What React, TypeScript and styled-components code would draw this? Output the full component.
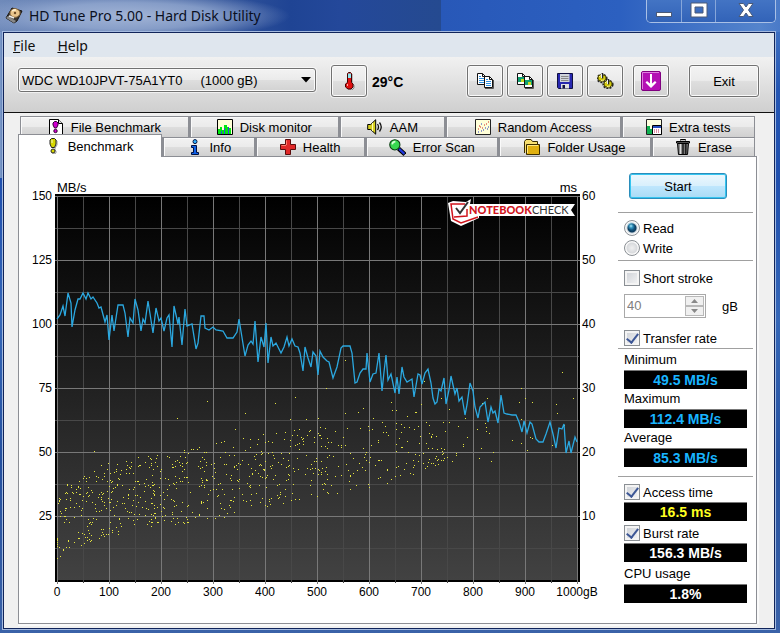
import React from 'react';
import styled, { createGlobalStyle, css } from 'styled-components';

const GlobalStyle = createGlobalStyle`
  * { box-sizing: border-box; }
  body {
    margin: 0;
    font-family: "Liberation Sans", Arial, sans-serif;
    font-size: 13px;
    color: #000;
  }
  button, input, select { font: inherit; color: inherit; margin: 0; }
`;

/* ---------- window frame ---------- */

const Window = styled.div`
  min-height: 100vh;
  display: flex;
  flex-direction: column;
  padding: 0 5px 4px 3px;
  background:
    linear-gradient(90deg, #7f9dcb 0, #5878b0 3px, transparent 4px) 0 32px / 4px 146px no-repeat,
    linear-gradient(180deg, #4a7cc8 0, #2456b4 90px, #1f4fae 180px, #3567b8 320px, #24509f 460px, #3a62a8 633px);
`;

const TitleBar = styled.header`
  height: 32px;
  margin: 0 -5px 0 -3px;
  padding: 0 4px 0 5px;
  display: flex;
  align-items: flex-start;
  background:
    radial-gradient(ellipse 160px 24px at 130px 16px, rgba(176, 192, 222, 0.85) 0, rgba(160, 180, 216, 0.7) 55%, rgba(150, 170, 210, 0.35) 80%, transparent 100%),
    linear-gradient(90deg, #6f8aba 0, #45649f 160px, #1f4494 290px, #24489a 340px, #254a90 441px, #2858b8 441px, #2c60c0 620px, #5484cc 760px, #4a7ac8 100%);
`;

const TitleText = styled.h1`
  margin: 0 0 0 6px;
  flex: 1;
  font: 400 14px/32px "Noto Sans", "Open Sans", sans-serif;
  color: #0a0f1e;
  white-space: nowrap;
`;

const TitleIcon = styled.svg`
  margin-top: 7px;
`;

const WindowButtons = styled.div`
  display: flex;
  height: 23px;
  border: 1px solid #a9c0e6;
  border-top: 0;
  border-radius: 0 0 5px 5px;
  overflow: hidden;
`;

const WindowButton = styled.button<{ $wide?: boolean }>`
  width: ${p => (p.$wide ? 60 : 34)}px;
  padding: 0;
  border: 0;
  display: flex;
  justify-content: center;
  background: linear-gradient(180deg, #4374c4, #3263b8);
  & + & { border-left: 1px solid #86a6da; }
`;

const Client = styled.main`
  flex: 1;
  display: flex;
  flex-direction: column;
  background: #f0f0f0;
  border: 1px solid #10245a;
  box-shadow: 0 0 0 1px #a4badf;
`;

const MenuBar = styled.nav`
  height: 24px;
  display: flex;
  gap: 22px;
  padding-left: 9px;
  background: #dfe6ee;
`;

const MenuItem = styled.a`
  font: 400 14px/25px "Noto Sans", "Open Sans", sans-serif;
  color: #101010;
  text-decoration: none;
`;

/* ---------- toolbar ---------- */

const Toolbar = styled.div`
  height: 56px;
  display: flex;
  align-items: flex-start;
  padding: 8px 15px 0 14px;
  background: linear-gradient(180deg, #f1f1f1 0, #cfcfcf 100%);
  border-bottom: 1px solid #111;
`;

const raised = css`
  border: 1px solid #727272;
  border-radius: 3px;
  background: linear-gradient(180deg, #f3f3f3 0, #ebebeb 48%, #dedede 52%, #d2d2d2 100%);
  box-shadow: 0 0 0 1px rgba(255, 255, 255, 0.6), inset 0 0 0 1px #fafafa;
`;

const DriveField = styled.label`
  position: relative;
  width: 298px;
  margin: 3px 15px 0 0;
`;

const DriveSelect = styled.select`
  appearance: none;
  width: 100%;
  height: 24px;
  padding: 0 24px 0 3px;
  ${raised}
`;

const DriveArrow = styled.svg`
  position: absolute;
  right: 5px;
  top: 9px;
  pointer-events: none;
`;

const ToolButton = styled.button`
  width: 36px;
  height: 32px;
  padding: 0;
  display: flex;
  align-items: center;
  justify-content: center;
  ${raised}
`;

const Temperature = styled.output`
  flex: 1;
  padding-left: 5px;
  font-size: 14px;
  font-weight: 700;
  line-height: 34px;
`;

const ToolGroup = styled.div`
  display: flex;
  gap: 4px;
  margin-right: 10px;
`;

const ExitButton = styled(ToolButton)`
  width: 70px;
  margin-left: 10px;
`;

/* ---------- tabs ---------- */

const Tabs = styled.div`
  flex: 1;
  display: flex;
  flex-direction: column;
  padding: 3px 17px 4px 14px;
`;

const TabRow = styled.div<{ $back?: boolean }>`
  display: flex;
  align-items: flex-end;
  height: ${p => (p.$back ? 21 : 19)}px;
  padding: ${p => (p.$back ? '0 2px' : '0 2px 0 0')};
`;

const Tab = styled.button<{ $grow: number; $back?: boolean; $active?: boolean }>`
  flex: ${p => p.$grow} 1 0;
  min-width: 0;
  height: ${p => (p.$back ? 21 : 19)}px;
  padding: 0;
  display: flex;
  align-items: center;
  justify-content: center;
  gap: 7px;
  border: 1px solid #8c8e94;
  border-width: 1px 1px 0 1px;
  background: linear-gradient(180deg, #f2f2f2 0, #ebebeb 48%, #dddddd 52%, #d0d0d0 100%);
  box-shadow: inset 1px 1px 0 #fafafa;
  white-space: nowrap;
  ${p => !p.$active && css`& + & { border-left-width: 2px; }`}
  ${p => p.$active && css`
    position: relative;
    z-index: 1;
    height: 23px;
    margin-bottom: -1px;
    padding-right: 2px;
    background: #fff;
    box-shadow: none;
  `}
`;

const Panel = styled.section`
  flex: 1;
  display: flex;
  align-items: flex-start;
  padding-right: 3px;
  background: #fff;
  border: 1px solid #8c8e94;
  box-shadow: 2px 0 0 #fafafa, 0 2px 0 #fafafa;
`;

/* ---------- chart ---------- */

const Chart = styled.div`
  flex: 1;
  min-width: 0;
  display: grid;
  grid-template-columns: 36px 1fr 38px;
  grid-template-rows: 37px 390px 17px;
  font-size: 12px;
`;

const Units = styled.div`
  grid-area: 1 / 2;
  align-self: end;
  display: flex;
  justify-content: space-between;
  padding: 0 3px 0 2px;
  font-size: 13px;
  line-height: 13px;
`;

const PlotArea = styled.div`
  grid-area: 2 / 2;
  position: relative;
`;

const Plot = styled.svg`
  display: block;
  width: 100%;
  height: 390px;
`;

const Scale = styled.div<{ $side: 'left' | 'right' }>`
  grid-area: 1 / ${p => (p.$side === 'left' ? 1 : 3)} / 4;
  padding: 7px ${p => (p.$side === 'left' ? '3px 0 0' : '0 0 2px')};
  text-align: ${p => (p.$side === 'left' ? 'right' : 'left')};
`;

const ScaleLabel = styled.div`
  line-height: 64px;
  height: 64px;
`;

const Positions = styled.div`
  grid-area: 3 / 1 / 4 / 4;
  display: grid;
  grid-template-columns: repeat(11, minmax(0, 1fr));
  padding: 0 15px 0 12px;
  line-height: 17px;
  text-align: center;
  white-space: nowrap;
`;

const Watermark = styled.svg`
  position: absolute;
  top: 5px;
  right: 4px;
`;

/* ---------- results column ---------- */

const Sidebar = styled.aside`
  width: 135px;
  display: flex;
  flex-direction: column;
  padding: 16px 0 20px;
`;

const StartButton = styled.button`
  width: 98px;
  height: 26px;
  margin-left: 11px;
  padding: 0;
  border: 1px solid #2a8dbb;
  border-radius: 3px;
  background: linear-gradient(180deg, #ecf7fd 0, #d9f0fc 48%, #bee6fd 52%, #a9dbf5 100%);
  box-shadow: inset 0 0 0 1px #35c5f0;
`;

const Rule = styled.hr<{ $above: number; $below: number }>`
  width: 100%;
  height: 1px;
  margin: ${p => p.$above}px 0 ${p => p.$below}px;
  border: 0;
  background: #a0a0a0;
`;

const Option = styled.label`
  height: 20px;
  display: flex;
  align-items: center;
  gap: 3px;
  padding-left: 6px;
  white-space: nowrap;
`;

const Radio = styled.input.attrs({ type: 'radio' })`
  appearance: none;
  width: 16px;
  height: 16px;
  border: 1px solid #8a8f94;
  border-radius: 50%;
  background: radial-gradient(circle at 50% 50%, #f0f0f0 0, #d8dadd 5px, #f8f8f8 6px);
  &:checked {
    background:
      radial-gradient(circle at 6px 5px, #a8ecfc 0, rgba(60, 170, 215, 0.6) 2px, transparent 4px),
      radial-gradient(circle at 50% 50%, #1a6f9e 0, #0d3a5c 4px, #c8d4dc 5px, #f8f8f8 6px);
  }
`;

const Check = styled.input.attrs({ type: 'checkbox' })`
  appearance: none;
  width: 16px;
  height: 16px;
  display: grid;
  place-items: center;
  border: 1px solid #8a8f94;
  background: linear-gradient(135deg, #cbcfd5, #f6f6f6);
  box-shadow: inset 0 0 0 2px #f4f4f4;
  &:checked::after {
    content: '';
    width: 5px;
    height: 10px;
    margin-bottom: 3px;
    border: solid #3d5796;
    border-width: 0 2px 2px 0;
    transform: rotate(38deg);
  }
`;

const StrokeRow = styled.div`
  display: flex;
  align-items: center;
  gap: 16px;
  margin: 6px 0 10px 6px;
`;

const Spinner = styled.div`
  width: 82px;
  height: 24px;
  display: flex;
  padding: 1px;
  border: 1px solid #a9a9a9;
`;

const SpinnerInput = styled.input`
  flex: 1;
  min-width: 0;
  padding: 0 1px 1px;
  border: 0;
  background: #fff;
  color: #808080;
`;

const SpinnerButtons = styled.div`
  width: 19px;
  display: grid;
  grid-template-rows: 1fr 1fr;
`;

const SpinnerButton = styled.button`
  padding: 0;
  display: grid;
  place-items: center;
  border: 1px solid #b8b8b8;
  background: #f0f0f0;
`;

const StatLabel = styled.div`
  height: 20px;
  padding-left: 6px;
  line-height: 20px;
`;

const StatValue = styled.output<{ $color: string }>`
  display: block;
  height: 19px;
  margin: 0 6px;
  border-top: 1px solid #777;
  background: #000;
  color: ${p => p.$color};
  font-size: 14px;
  font-weight: 700;
  line-height: 18px;
  text-align: center;
`;

const Results = styled.div<{ $gap?: number }>`
  display: flex;
  flex-direction: column;
  gap: ${p => p.$gap ?? 0}px;
`;

/* ---------- icons ---------- */

const Icon = ({ children, size = 16 }: { children: React.ReactNode; size?: number }) => (
  <svg width={size} height={size} viewBox="0 0 16 16" aria-hidden="true">{children}</svg>
);

const Exclamation = ({ fill }: { fill: string }) => (
  <>
    <path d="M9 1l3 2v4l-2 3v2l1 1v2l-2 1H7" fill="none" stroke="#999" />
    <path d="M6.5.5h3l1.500 1.500v4L9.500 9.500h-3L5 6V2z" fill={fill} stroke="#222" strokeWidth="1" />
    <circle cx="8" cy="13" r="2" fill={fill} stroke="#222" />
    <path d="M7 2v3" stroke="#fff" strokeOpacity=".8" />
  </>
);

const BenchmarkIcon = () => <Icon><Exclamation fill="#d8d800" /></Icon>;

const FileBenchmarkIcon = () => (
  <Icon>
    <path d="M1.500.5h9l4 4v11h-13z" fill="#fff" stroke="#000" />
    <path d="M10.500.5v4h4" fill="#ddd" stroke="#000" />
    <path d="M6.500 2.500h2l1.500 1.500v2L8.500 9h-2L5 6V4z" fill="#d000d0" stroke="#300030" />
    <circle cx="7.500" cy="12" r="1.700" fill="#d000d0" stroke="#300030" />
  </Icon>
);

const MonitorIcon = () => (
  <Icon>
    <path d="M.5.5h15v15H.5z" fill="#ffffd8" stroke="#000" />
    <path d="M1 10h2V8h2v3h2V6h3v2h2v1h2v6H1z" fill="#00e810" />
    <path d="M4 12h1v3H4zM7 9h1v6H7zM11 8h1v7h-1z" fill="#3a40e0" />
  </Icon>
);

const SpeakerIcon = () => (
  <Icon>
    <path d="M.7 5.500h3l5-4.800v14.500l-5-4.700h-3z" fill="#d8d020" stroke="#000" />
    <path d="M5.500 4v8" stroke="#fffbb0" />
    <path d="M10.500 5q2 3 0 6M12.500 3.500q3.500 4.500 0 9" fill="none" stroke="#111" strokeWidth="1.300" />
  </Icon>
);

const RandomIcon = () => (
  <Icon>
    <path d="M.5.5h15v15H.5z" fill="#ffffd8" stroke="#222" />
    <path d="M3 10h1M5 8h1M7 9h1M9 6h1M11 5h1M13 3h1M4 7h1" stroke="#d02020" />
    <path d="M3 13h1M6 12h1M8 11h1M10 9h1M12 10h1M13 8h1M6 5h1" stroke="#2030c0" />
  </Icon>
);

const ExtraIcon = () => (
  <Icon>
    <path d="M.5.5h15v15H.5z" fill="#ffffe0" stroke="#222" />
    <path d="M1 7h3v3h3v5H1z" fill="#10b050" />
    <path d="M6.500 6.500h9v9h-9z" fill="#fff" stroke="#000" />
    <path d="M7 7h8v2H7z" fill="#2a50c0" />
    <path d="M8 11h1m1 0h1m1 0h1M8 13h1m1 0h1m1 0h1" stroke="#c02050" />
  </Icon>
);

const InfoIcon = () => (
  <Icon>
    <circle cx="8" cy="2.600" r="2" fill="#30b0ff" stroke="#001040" />
    <path d="M4.500 6.500h5v7h2v2h-7v-2h2v-5h-2z" fill="#1060e8" stroke="#001040" />
  </Icon>
);

const HealthIcon = () => (
  <Icon>
    <path d="M5.500.5h5v5h5v5h-5v5h-5v-5h-5v-5h5z" fill="#e02828" stroke="#5a0c0c" />
    <path d="M6.500 6V1.500M1.500 6.500H6" stroke="#ff8070" fill="none" />
  </Icon>
);

const ScanIcon = () => (
  <Icon size={17}>
    <path d="M9 9l6 5.500" stroke="#000" strokeWidth="4" />
    <path d="M9.500 9.300l5 4.700" stroke="#2038e0" strokeWidth="2" />
    <circle cx="5.500" cy="5.500" r="4.800" fill="#38d850" stroke="#0a3a10" />
    <path d="M3 5q.5-2.500 3-2.500" fill="none" stroke="#d8ffd8" strokeWidth="1.500" />
  </Icon>
);

const FolderIcon = () => (
  <Icon>
    <path d="M.5 14V2.500l1.500-2h5l1.500 2h5v3" fill="#f8e070" stroke="#3a2c00" />
    <path d="M2.500 5.500h13v10h-13z" fill="#e0b010" stroke="#3a2c00" />
    <path d="M3.500 14V6.500H14" fill="none" stroke="#ffe880" />
  </Icon>
);

const TrashIcon = () => (
  <Icon>
    <path d="M5.500 1.500v-1h5v1M1.500 4V2.500h13V4z" fill="#999" stroke="#000" />
    <path d="M2.500 4.500h11l-1 11h-9z" fill="#777" stroke="#000" />
    <path d="M5.500 5v10" stroke="#ddd" strokeWidth="1.500" />
    <path d="M8 5v10M10.800 5v10" stroke="#111" strokeWidth="1.300" />
  </Icon>
);

const ThermometerIcon = () => (
  <svg width="12" height="18" viewBox="0 0 12 18" aria-hidden="true">
    <path d="M9 2v9l2 2v3l-2 2H5" fill="none" stroke="#888" />
    <path d="M4.500 1.500l1-1h2l1 1v9l1.500 1.500v3L8 17H5l-2.500-2v-3l2-1.500z" fill="#e01010" stroke="#400" />
    <path d="M5 1.500h3V6H5z" fill="#90e8f0" />
    <path d="M4.500 12v2" stroke="#ffb0a0" />
  </svg>
);

const Sheet = ({ x, y, picture }: { x: number; y: number; picture?: boolean }) => (
  <g transform={`translate(${x} ${y})`}>
    <path d="M.5.5h5l3 3v8h-8z" fill="#fff" stroke="#111" />
    <path d="M5.500.5v3h3" fill="none" stroke="#111" />
    {picture ? (
      <>
        <path d="M1 4h7v5H1z" fill="#10a070" />
        <path d="M4 6h3v3H4z" fill="#c8d820" />
      </>
    ) : (
      <path d="M2 3.500h2M2 5.500h5M2 7.500h5M2 9.500h5" stroke="#3090e0" />
    )}
  </g>
);

const CopyIcon = ({ picture }: { picture?: boolean }) => (
  <svg width="17" height="16" viewBox="0 0 17 16" aria-hidden="true">
    <path d="M8 15.500h8.500V7" fill="none" stroke="#555" />
    <Sheet x={0} y={0} picture={picture} />
    <Sheet x={7} y={3} picture={picture} />
  </svg>
);

const SaveIcon = () => (
  <Icon>
    <path d="M.5.5h15v15h-14l-1-1z" fill="#2828b0" stroke="#101040" />
    <path d="M3 1h9.500v8H3z" fill="#d0d4dc" />
    <path d="M4 3.500h7.500M4 5.500h7.500M4 7.500h7.500" stroke="#888" />
    <path d="M4 11h8v4.500H4z" fill="#e0e0e0" />
    <path d="M5.500 12h2.500v3.500H5.500z" fill="#101040" />
  </Icon>
);

const Gear = ({ x, y }: { x: number; y: number }) => (
  <g transform={`translate(${x} ${y})`}>
    <ellipse cx="5" cy="5.500" rx="4.600" ry="3.800" fill="none" stroke="#222" strokeWidth="2" strokeDasharray="2 1" />
    <ellipse cx="5" cy="5" rx="4" ry="3.300" fill="#d4cc10" stroke="#5a5400" />
    <path d="M2 4q1-1.500 2.500-1.500M7 7q-1.500 1-3 .5" stroke="#f8f490" fill="none" />
    <path d="M5.500 0v5.500" stroke="#222" strokeWidth="1.500" />
    <path d="M4.500 1v4" stroke="#f0f0f0" />
  </g>
);

const GearsIcon = () => (
  <svg width="17" height="16" viewBox="0 0 17 16" aria-hidden="true">
    <Gear x={0} y={0} />
    <Gear x={6} y={6} />
  </svg>
);

const DownIcon = () => (
  <svg width="20" height="20" viewBox="0 0 20 20" aria-hidden="true">
    <rect x=".5" y=".5" width="19" height="19" rx="1.500" fill="#b410b4" stroke="#800080" />
    <path d="M1.500 18V1.500H18" fill="none" stroke="#e080e0" />
    <path d="M9 3h2v9.500l3-2.500 1.500 1.500L10 17l-5.500-5.500L6 10l3 2.500z" fill="#fff" />
  </svg>
);

const DiskIcon = () => (
  <TitleIcon width="18" height="17" viewBox="0 0 18 17" aria-hidden="true">
    <path d="M7 1l10 3-5 10-3 2-8-5z" fill="#3a3632" stroke="#181410" />
    <path d="M1 11l8 5 2-2-8-5z" fill="#888" />
    <ellipse cx="10" cy="6" rx="5" ry="4.300" fill="#e8c48c" stroke="#8a6a40" />
    <path d="M7 4q2-1.500 4-1" stroke="#fff0d0" fill="none" strokeWidth="1.500" />
    <circle cx="10" cy="6" r="1.200" fill="#6a4a28" />
    <path d="M4 9l5 2" stroke="#eee" strokeWidth="1.500" />
  </TitleIcon>
);

/* ---------- measurement data, in plot units of 520 x 384 ---------- */

const transferTrace =
  '0,123 3,119 6,110 8,120 11,97 14,107 15,131 18,114 21,103 23,103 26,97 29,103 31,97 34,103 36,101 40,107 42,112 44,111 ' +
  '48,126 50,119 52,144 55,119 57,135 61,109 66,109 68,117 71,141 73,122 76,127 78,103 81,114 84,135 86,123 88,127 91,105 ' +
  '96,137 99,112 102,125 104,122 107,135 110,122 112,119 115,151 117,110 121,128 122,121 125,149 128,113 130,130 135,128 ' +
  '139,153 141,147 144,120 147,120 148,132 152,134 156,131 159,134 166,135 170,142 176,142 180,136 182,123 188,160 191,149 ' +
  '194,145 196,148 198,125 201,166 204,141 207,151 209,127 211,167 214,141 216,150 219,147 224,157 227,151 230,141 232,150 ' +
  '235,143 238,150 241,151 243,157 246,175 248,151 251,162 254,171 256,156 259,160 261,179 263,155 266,161 270,165 272,166 ' +
  '276,182 280,171 284,152 286,150 293,150 295,157 298,187 300,186 303,177 306,173 309,173 310,157 313,186 316,178 319,177 ' +
  '322,157 325,195 327,176 329,159 331,184 334,178 338,197 340,181 342,198 345,171 347,181 350,186 355,183 357,201 361,178 ' +
  '363,179 365,188 368,177 371,173 374,187 376,202 378,208 380,206 382,193 384,195 387,182 389,208 392,194 394,180 398,198 ' +
  '400,192 402,205 405,201 408,219 410,209 413,187 416,195 418,211 421,222 423,211 428,206 431,226 434,211 436,217 438,215 ' +
  '441,227 444,199 447,217 450,218 455,219 459,219 462,226 465,236 467,225 470,237 473,226 475,228 479,243 482,246 486,246 ' +
  '489,238 493,226 496,238 499,252 502,232 505,233 507,228 509,257 512,245 514,257 518,241 520,246';

const scatteredSamples: [number, number][] = [
  [37, 255], [120, 222], [150, 205], [178, 233], [188, 217], [218, 207], [238, 201], [269, 192], [233, 223], [249, 223],
  [261, 222], [206, 238], [464, 192], [468, 202], [462, 206], [475, 206], [516, 202], [499, 208], [500, 217], [505, 176],
  [288, 164], [367, 185], [507, 229], [495, 249], [473, 241], [475, 242], [470, 254], [464, 247], [455, 244], [464, 223],
  [436, 256], [434, 265], [422, 262], [424, 252], [432, 237], [429, 235], [429, 231], [428, 227], [420, 233], [425, 207],
  [430, 202], [410, 241], [406, 248], [406, 250], [408, 222], [399, 257], [399, 259], [395, 265], [401, 230], [392, 213],
  [384, 202], [392, 226], [390, 261], [386, 264], [386, 257], [381, 263], [378, 269], [374, 267], [368, 272], [364, 208],
  [357, 269], [361, 265], [334, 206], [335, 214], [339, 214], [350, 220], [358, 216], [359, 216], [306, 212], [301, 216],
  [288, 217], [316, 222], [0, 362], [3, 360], [0, 350], [0, 348], [0, 346], [0, 344], [0, 342],
];

// x, fastest sample (bottom), slowest sample (top)
const accessBand = [
  [0, 358, 294], [20, 352, 280], [40, 343, 268], [75, 334, 262], [110, 330, 254], [150, 324, 247],
  [200, 314, 240], [260, 300, 228], [300, 296, 224], [340, 284, 224], [400, 264, 224],
];

function bandAt(x: number): [number, number] {
  const i = Math.max(1, accessBand.findIndex(b => b[0] >= x));
  const [x0, lo0, hi0] = accessBand[i - 1];
  const [x1, lo1, hi1] = accessBand[i];
  const t = (x - x0) / (x1 - x0);
  return [lo0 + (lo1 - lo0) * t, hi0 + (hi1 - hi0) * t];
}

function accessSamples(): [number, number][] {
  let seed = 20117;
  const next = () => {
    seed = (seed * 48271) % 2147483647;
    return seed / 2147483647;
  };
  const out = [...scatteredSamples];
  const add = (count: number, from: number, to: number) => {
    for (let i = 0; i < count; i++) {
      const x = from + next() * (to - from);
      const [lo, hi] = bandAt(x);
      out.push([Math.round(x), Math.round(hi + next() * (lo - hi))]);
    }
  };
  add(340, 0, 130);
  add(270, 130, 272);
  add(120, 272, 390);
  return out;
}

const samplePath = accessSamples().map(([x, y]) => `M${x} ${y}h1v1h-1z`).join('');

const range = (n: number) => Array.from({ length: n }, (_, i) => i);

const BenchmarkChart = () => (
  <Chart>
    <Units><span>MB/s</span><span>ms</span></Units>
    <Scale $side="left">
      {[150, 125, 100, 75, 50, 25].map(v => <ScaleLabel key={v}>{v}</ScaleLabel>)}
    </Scale>
    <PlotArea>
      <Plot viewBox="0 0 525 390" preserveAspectRatio="none" role="img" aria-label="Transfer rate and access time">
        <defs>
          <linearGradient id="plot-shade" x1="0" y1="0" x2="0" y2="1">
            <stop offset="0" stopColor="#000" />
            <stop offset="1" stopColor="#424242" />
          </linearGradient>
        </defs>
        <rect width="525" height="388" fill="#000" />
        <g transform="translate(2 2)" shapeRendering="crispEdges">
          <rect width="521" height="384" fill="url(#plot-shade)" />
          {range(10).map(i => (
            <rect key={i} x={26 + i * 52} y="0" width="1" height="387" fill="#484848" />
          ))}
          {range(6).map(i => (
            <rect key={i} x="-2" y={32 + i * 64} width={i === 0 ? 386 : 524} height="1" fill="#484848" />
          ))}
          {range(11).map(i => (
            <rect key={i} x={i * 52} y="0" width="1" height="388" fill="#787878" />
          ))}
          {range(6).map(i => (
            <rect key={i} x="-2" y={i * 64} width="525" height="1" fill="#787878" />
          ))}
          <path d={samplePath} fill="#e6e640" />
        </g>
        <polyline transform="translate(2 2)" points={transferTrace} fill="none" stroke="#2ba8e0" strokeWidth="1.300" />
      </Plot>
      <Watermark width="128" height="28" viewBox="0 0 128 28" role="img" aria-label="Notebookcheck">
        <path d="M0 4l5-2 13 1 5-3-1 5h105l-4 6 4 6H31v2l-18 8-10-5z" fill="#fff" />
        <path d="M17 5L3 5l2 15 8 4 17-6M6 18l13-1 0-7" fill="none" stroke="#d0141c" strokeWidth="1.500" />
        <path d="M8 9l4 5 8-11" fill="none" stroke="#333" strokeWidth="2" />
        <text x="21" y="15" fontFamily="Lato, sans-serif" fontSize="11" fontWeight="900" fill="#d0141c">NOTEBOOK</text>
        <text x="84" y="15" fontFamily="Lato, sans-serif" fontSize="11" fill="#333">CHECK</text>
      </Watermark>
    </PlotArea>
    <Scale $side="right">
      {[60, 50, 40, 30, 20, 10].map(v => <ScaleLabel key={v}>{v}</ScaleLabel>)}
    </Scale>
    <Positions>
      {range(11).map(i => <span key={i}>{i === 10 ? '1000gB' : i * 100}</span>)}
    </Positions>
  </Chart>
);

const backTabs = [
  { label: 'File Benchmark', icon: <FileBenchmarkIcon />, grow: 170 },
  { label: 'Disk monitor', icon: <MonitorIcon />, grow: 150 },
  { label: 'AAM', icon: <SpeakerIcon />, grow: 105 },
  { label: 'Random Access', icon: <RandomIcon />, grow: 176 },
  { label: 'Extra tests', icon: <ExtraIcon />, grow: 134 },
];

const frontTabs = [
  { label: 'Benchmark', icon: <BenchmarkIcon />, grow: 144, active: true },
  { label: 'Info', icon: <InfoIcon />, grow: 92 },
  { label: 'Health', icon: <HealthIcon />, grow: 110 },
  { label: 'Error Scan', icon: <ScanIcon />, grow: 134 },
  { label: 'Folder Usage', icon: <FolderIcon />, grow: 154 },
  { label: 'Erase', icon: <TrashIcon />, grow: 104 },
];

const CYAN = '#18b4ff';

export default function App() {
  return (
    <>
      <GlobalStyle />
      <Window>
        <TitleBar>
          <DiskIcon />
          <TitleText>HD Tune Pro 5.00 - Hard Disk Utility</TitleText>
          <WindowButtons>
            <WindowButton aria-label="Minimize">
              <svg width="18" height="22"><rect x="1.500" y="12.500" width="15" height="4" fill="#fff" stroke="#4a5a78" /></svg>
            </WindowButton>
            <WindowButton aria-label="Maximize">
              <svg width="18" height="22"><path d="M1 3h16v14H1zM5 7v6h8V7z" fill="#fff" fillRule="evenodd" stroke="#4a5a78" /></svg>
            </WindowButton>
            <WindowButton $wide aria-label="Close">
              <svg width="18" height="22"><path d="M2 3.500h4.500L9 7l2.500-3.500H16L11.500 10l4.500 6.500h-4.500L9 13l-2.500 3.500H2L6.500 10z" fill="#fff" stroke="#4a5a78" /></svg>
            </WindowButton>
          </WindowButtons>
        </TitleBar>
        <Client>
          <MenuBar>
            <MenuItem href="#file"><u>F</u>ile</MenuItem>
            <MenuItem href="#help"><u>H</u>elp</MenuItem>
          </MenuBar>
          <Toolbar>
            <DriveField>
              <DriveSelect aria-label="Drive">
                <option>{'WDC WD10JPVT-75A1YT0\u00a0\u00a0\u00a0\u00a0\u00a0(1000 gB)'}</option>
              </DriveSelect>
              <DriveArrow width="10" height="6" viewBox="0 0 10 6"><path d="M0 0h10L5 5.500z" /></DriveArrow>
            </DriveField>
            <ToolButton aria-label="Temperature"><ThermometerIcon /></ToolButton>
            <Temperature>29°C</Temperature>
            <ToolGroup>
              <ToolButton aria-label="Copy text"><CopyIcon /></ToolButton>
              <ToolButton aria-label="Copy screenshot"><CopyIcon picture /></ToolButton>
              <ToolButton aria-label="Save"><SaveIcon /></ToolButton>
              <ToolButton aria-label="Options"><GearsIcon /></ToolButton>
            </ToolGroup>
            <ToolGroup>
              <ToolButton aria-label="Minimize to tray"><DownIcon /></ToolButton>
            </ToolGroup>
            <ExitButton>Exit</ExitButton>
          </Toolbar>
          <Tabs>
            <TabRow $back>
              {backTabs.map(t => (
                <Tab key={t.label} $grow={t.grow} $back>{t.icon}{t.label}</Tab>
              ))}
            </TabRow>
            <TabRow>
              {frontTabs.map(t => (
                <Tab key={t.label} $grow={t.grow} $active={t.active}>{t.icon}{t.label}</Tab>
              ))}
            </TabRow>
            <Panel>
              <BenchmarkChart />
              <Sidebar>
                <StartButton>Start</StartButton>
                <Rule $above={13} $below={5} />
                <Option><Radio name="mode" defaultChecked />Read</Option>
                <Option><Radio name="mode" />Write</Option>
                <Rule $above={2} $below={7} />
                <Option><Check />Short stroke</Option>
                <StrokeRow>
                  <Spinner>
                    <SpinnerInput type="text" id="stroke-size" defaultValue="40" disabled />
                    <SpinnerButtons>
                      <SpinnerButton disabled aria-label="Increase"><svg width="7" height="4"><path d="M0 4h7L3.500 0z" fill="#888" /></svg></SpinnerButton>
                      <SpinnerButton disabled aria-label="Decrease"><svg width="7" height="4"><path d="M0 0h7L3.500 4z" fill="#888" /></svg></SpinnerButton>
                    </SpinnerButtons>
                  </Spinner>
                  <label htmlFor="stroke-size">gB</label>
                </StrokeRow>
                <Option><Check defaultChecked />Transfer rate</Option>
                <Rule $above={0} $below={1} />
                <Results>
                  <div><StatLabel>Minimum</StatLabel><StatValue $color={CYAN}>49.5 MB/s</StatValue></div>
                  <div><StatLabel>Maximum</StatLabel><StatValue $color={CYAN}>112.4 MB/s</StatValue></div>
                  <div><StatLabel>Average</StatLabel><StatValue $color={CYAN}>85.3 MB/s</StatValue></div>
                </Results>
                <Rule $above={9} $below={5} />
                <Results $gap={2}>
                  <div><Option><Check defaultChecked />Access time</Option><StatValue $color="#ffff20">16.5 ms</StatValue></div>
                  <div><Option><Check defaultChecked />Burst rate</Option><StatValue $color="#fff">156.3 MB/s</StatValue></div>
                  <div><StatLabel>CPU usage</StatLabel><StatValue $color="#fff">1.8%</StatValue></div>
                </Results>
              </Sidebar>
            </Panel>
          </Tabs>
        </Client>
      </Window>
    </>
  );
}
